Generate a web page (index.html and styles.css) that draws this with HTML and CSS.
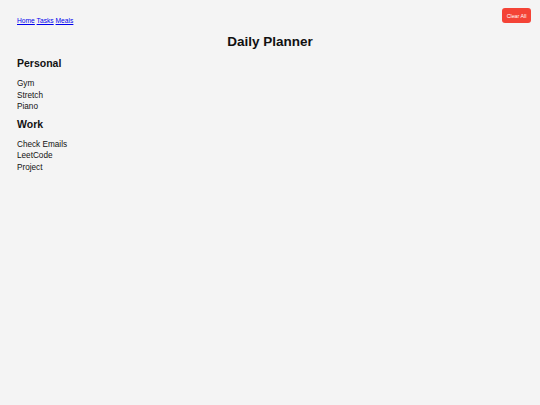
FILE: index.html
```html
<!DOCTYPE html>
<html lang="en">
<head>
<meta charset="utf-8">
<title>Daily Planner</title>
<link rel="stylesheet" href="styles.css">
</head>
<body>
<nav class="nav">
  <a href="#">Home</a> <a href="#">Tasks</a> <a href="#">Meals</a>
</nav>
<button class="clear-btn">Clear All</button>
<h1 class="title">Daily Planner</h1>
<section class="group">
  <h2 class="group-title">Personal</h2>
  <ul class="items">
    <li>Gym</li>
    <li>Stretch</li>
    <li>Piano</li>
  </ul>
</section>
<section class="group">
  <h2 class="group-title">Work</h2>
  <ul class="items">
    <li>Check Emails</li>
    <li>LeetCode</li>
    <li>Project</li>
  </ul>
</section>
</body>
</html>
```
FILE: styles.css
```css
html, body {
  margin: 0;
  background: #f4f4f4;
}
body {
  padding: 16px 17px 0;
  font-family: "Liberation Sans", Arial, sans-serif;
  color: #111;
}
.nav {
  font-size: 6.7px;
  line-height: 10px;
}
.nav a {
  color: #0000ee;
}
.clear-btn {
  position: absolute;
  top: 8px;
  right: 9px;
  width: 29px;
  height: 15px;
  padding: 0;
  border: none;
  border-radius: 3px;
  background: #f44336;
  color: #fff;
  font-family: "Liberation Sans", Arial, sans-serif;
  font-size: 5.3px;
}
.title {
  margin: 8px 0 6px;
  font-size: 13.5px;
  line-height: 16px;
  text-align: center;
}
.group-title {
  margin: 0 0 8px;
  font-size: 10.5px;
  line-height: 14px;
}
.items {
  margin: 0 0 4px;
  padding: 0;
  list-style: none;
  font-size: 8.2px;
  line-height: 11.5px;
}
```
